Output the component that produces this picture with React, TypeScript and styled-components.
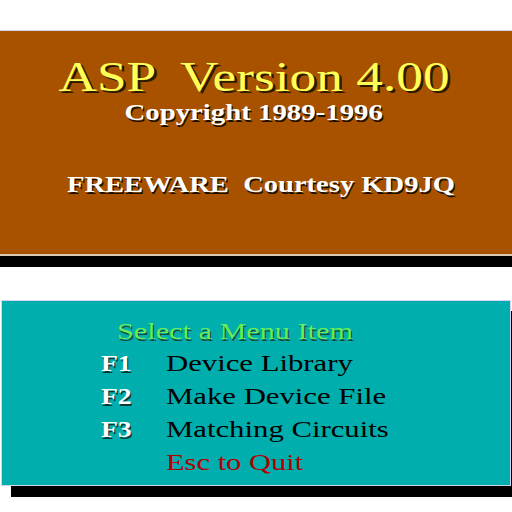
import React from 'react';
import styled, { createGlobalStyle } from 'styled-components';

const GlobalStyle = createGlobalStyle`
  html, body {
    margin: 0;
    padding: 0;
    background: #ffffff;
    overflow: hidden;
  }
`;

const Screen = styled.div`
  width: 512px;
  height: 512px;
  padding-top: 30px;
  box-sizing: border-box;
  font-family: 'Liberation Serif', 'Times New Roman', serif;
`;

// the old screen font is a wide bitmap serif, so glyphs get stretched sideways
const Wide = styled.span<{ $k: number; $origin?: string }>`
  display: inline-block;
  white-space: pre;
  transform: scaleX(${(p) => p.$k});
  transform-origin: ${(p) => p.$origin || 'left'} center;
`;

const TitlePanel = styled.section`
  height: 226px;
  box-sizing: border-box;
  background: #a85200;
  border-top: 1px solid #d6d0e6;
  border-bottom: 2px solid #d8c8b4;
  padding-top: 24px;
  display: flex;
  flex-direction: column;
`;

const ShadowBar = styled.div`
  height: 11px;
  background: #000;
`;

const Title = styled.h1`
  margin: 0 0 0 -4px;
  font-size: 42px;
  font-weight: normal;
  line-height: 44px;
  text-align: center;
  color: #ffff55;
  text-shadow: 2px 2px 0 #2a1a00;
`;

const Copyright = styled.div`
  margin: 0 0 0 -4px;
  font-size: 24px;
  font-weight: bold;
  line-height: 26px;
  text-align: center;
  color: #ffffff;
  text-shadow: 1px 2px 0 #1a1000;
`;

const Freeware = styled.div`
  margin-top: 46px;
  padding-left: 67px;
  font-size: 24px;
  font-weight: bold;
  line-height: 26px;
  color: #ffffff;
  text-shadow: 1px 2px 0 #1a1000;
`;

const MenuPanel = styled.section`
  margin: 33px 0 0 1px;
  width: 510px;
  height: 186px;
  box-sizing: border-box;
  background: #00aead;
  border: 1px solid #d8d4f0;
  border-bottom-color: #c8d8e0;
  box-shadow: 10px 11px 0 #000;
  padding: 14px 0 0 99px;
`;

const MenuHeading = styled.div`
  margin-left: 16px;
  font-size: 24px;
  line-height: 32px;
  color: #66ee55;
  text-shadow: 1px 2px 0 #1a4a40;
`;

const MenuGrid = styled.div`
  display: grid;
  grid-template-columns: 65px auto;
  grid-auto-rows: 33px;
`;

const Key = styled.span`
  font-size: 24px;
  font-weight: bold;
  line-height: 33px;
  color: #ffffff;
  text-shadow: 1px 2px 0 #0a3a38;
`;

const Item = styled.span<{ $quit?: boolean }>`
  font-size: 24px;
  line-height: 33px;
  color: ${(p) => (p.$quit ? '#b00000' : '#000000')};
`;

const items = [
  { key: 'F1', label: 'Device Library' },
  { key: 'F2', label: 'Make Device File' },
  { key: 'F3', label: 'Matching Circuits' },
];

export default function App() {
  return (
    <Screen>
      <GlobalStyle />
      <TitlePanel>
        <Title>
          <Wide $k={1.27} $origin="center">{'ASP  Version 4.00'}</Wide>
        </Title>
        <Copyright>
          <Wide $k={1.2} $origin="center">Copyright 1989-1996</Wide>
        </Copyright>
        <Freeware>
          <Wide $k={1.19}>{'FREEWARE  Courtesy KD9JQ'}</Wide>
        </Freeware>
      </TitlePanel>
      <ShadowBar />
      <MenuPanel>
        <MenuHeading>
          <Wide $k={1.26}>Select a Menu Item</Wide>
        </MenuHeading>
        <MenuGrid>
          {items.map((it) => (
            <React.Fragment key={it.key}>
              <Key>
                <Wide $k={1.15}>{it.key}</Wide>
              </Key>
              <Item>
                <Wide $k={1.28}>{it.label}</Wide>
              </Item>
            </React.Fragment>
          ))}
          <span />
          <Item $quit>
            <Wide $k={1.27}>Esc to Quit</Wide>
          </Item>
        </MenuGrid>
      </MenuPanel>
    </Screen>
  );
}
